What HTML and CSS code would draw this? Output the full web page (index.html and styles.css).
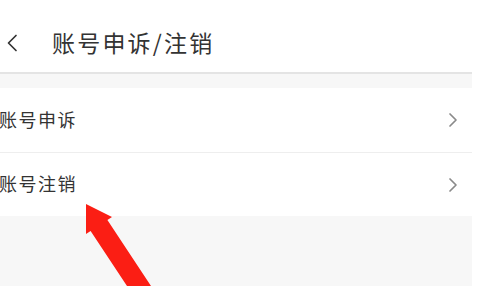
FILE: index.html
```html
<!DOCTYPE html>
<html lang="zh">
<head>
<meta charset="utf-8">
<link rel="stylesheet" href="styles.css">
</head>
<body>
<div class="page">
  <header class="header">
    <svg class="back" width="12" height="18" viewBox="0 0 12 18"><polyline points="10,1.5 2.5,9 10,16.5" fill="none" stroke="#333" stroke-width="1.7" stroke-linecap="round" stroke-linejoin="round"/></svg>
    <h1 class="title">账号申诉/注销</h1>
  </header>
  <main class="content">
    <ul class="list">
      <li class="row"><span class="label">账号申诉</span><svg class="chev" width="10" height="16" viewBox="0 0 10 16"><polyline points="2,2 8,8 2,14" fill="none" stroke="#8a8a8a" stroke-width="1.7" stroke-linecap="round" stroke-linejoin="round"/></svg></li>
      <li class="row"><span class="label">账号注销</span><svg class="chev" width="10" height="16" viewBox="0 0 10 16"><polyline points="2,2 8,8 2,14" fill="none" stroke="#8a8a8a" stroke-width="1.7" stroke-linecap="round" stroke-linejoin="round"/></svg></li>
    </ul>
  </main>
</div>
<svg class="arrow" width="480" height="286" viewBox="0 0 480 286"><polygon points="86,204 112,217 107.4,220 151,286 127,286 90.6,231 86,234" fill="#fb1e14"/></svg>
</body>
</html>
```
FILE: styles.css
```css
html, body {
  margin: 0;
  padding: 0;
  background: #ffffff;
  width: 480px;
  height: 286px;
  overflow: hidden;
  font-family: "Noto Sans CJK SC", "Noto Sans", sans-serif;
}
.page {
  width: 472px;
  height: 286px;
  display: flex;
  flex-direction: column;
}
.header {
  box-sizing: border-box;
  height: 74px;
  padding-top: 13px;
  border-bottom: 2px solid #e4e4e4;
  display: flex;
  align-items: center;
  background: #fff;
  flex-shrink: 0;
}
.back {
  margin-left: 6px;
}
.title {
  margin: 0 0 0 34px;
  font-size: 23px;
  font-weight: 400;
  color: #333;
  letter-spacing: 2.2px;
  line-height: 1;
}
.content {
  flex: 1;
  background: #f7f7f7;
  padding-top: 14px;
}
.list {
  list-style: none;
  margin: 0;
  padding: 0;
  background: #fff;
}
.row {
  height: 64px;
  display: flex;
  align-items: center;
  justify-content: space-between;
  box-sizing: border-box;
}
.row + .row {
  border-top: 1px solid #eeeeee;
}
.label {
  font-size: 18px;
  color: #333;
  margin-left: -1px;
  margin-top: -3px;
  letter-spacing: 1.5px;
}
.chev {
  margin-right: 14px;
}
.arrow {
  position: absolute;
  left: 0;
  top: 0;
  pointer-events: none;
}
```
